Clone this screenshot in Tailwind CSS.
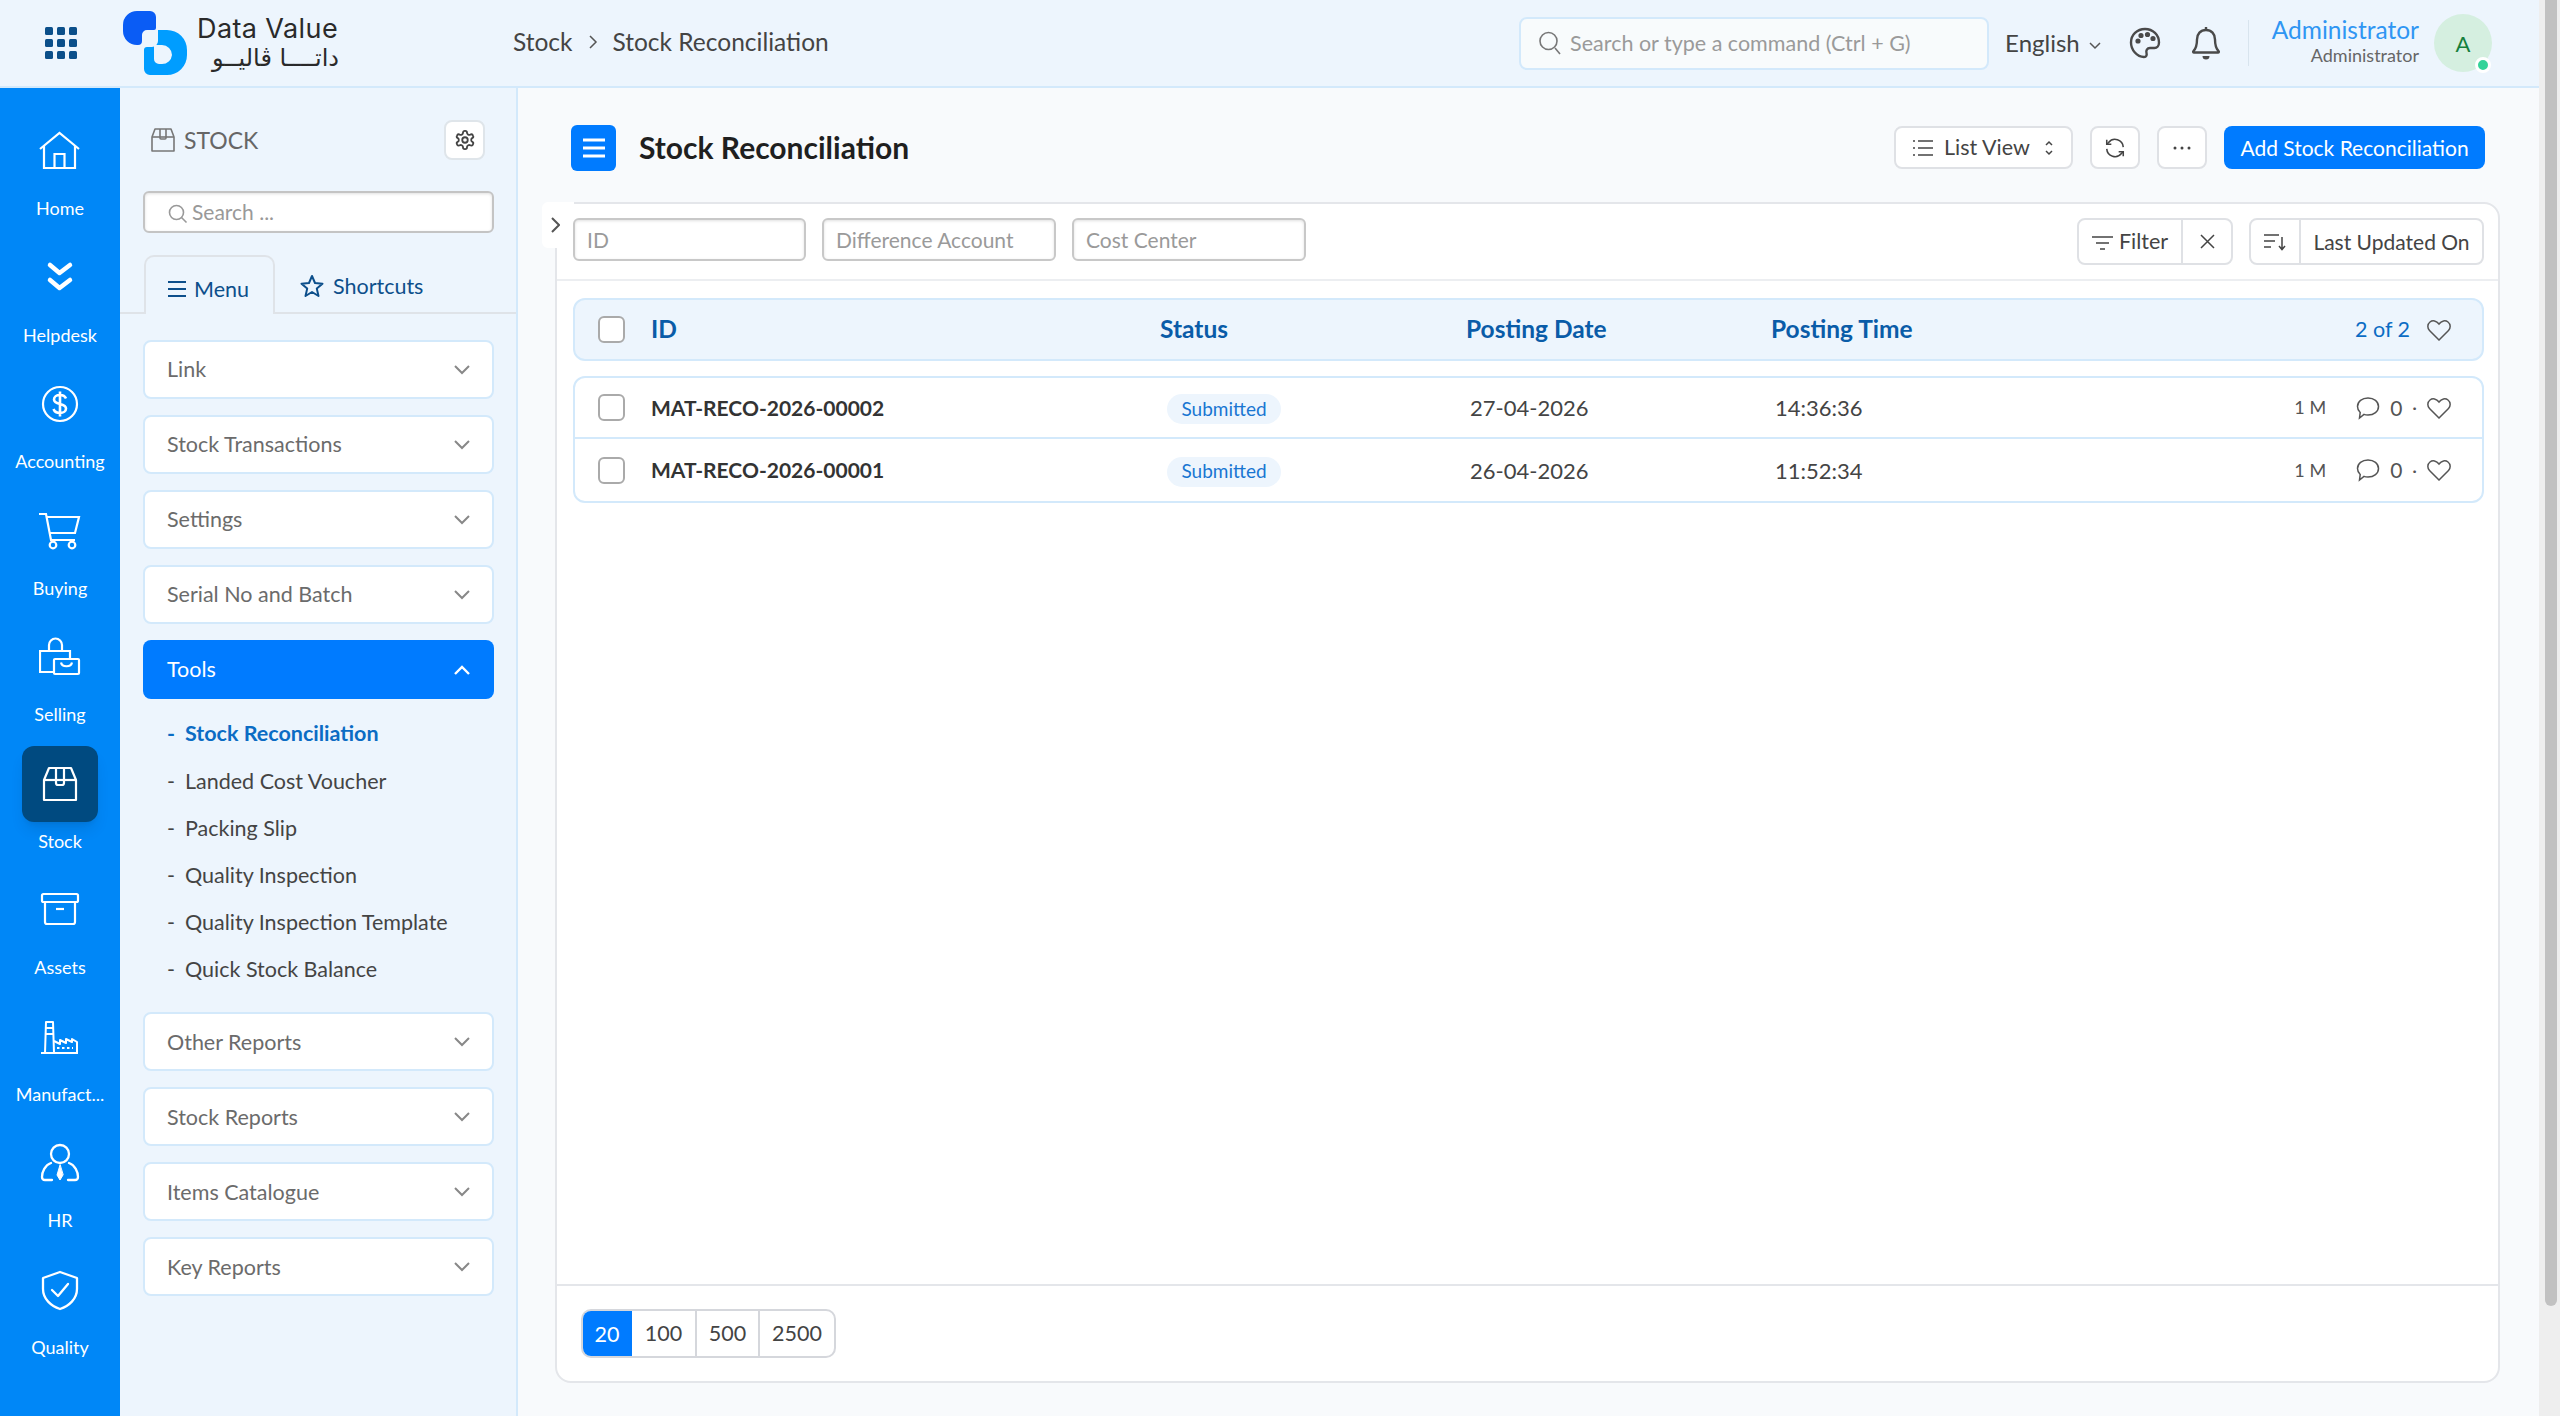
<!DOCTYPE html>
<html lang="en">
<head>
    <meta charset="UTF-8">
    <title>Stock Reconciliation</title>
    <script src="https://cdn.jsdelivr.net/npm/@tailwindcss/browser@4"></script>
</head>
<body class="h-screen overflow-hidden flex font-['Lato','Noto_Sans',sans-serif] text-[#444]">
    <div class="w-[2539px] h-full flex flex-col">
        <!-- Top bar -->
        <header class="h-[88px] shrink-0 flex items-center bg-[#edf5fd] border-b-2 border-[#d3e9fb]">
            <div class="w-[123px] shrink-0 pl-[45px]">
                <svg width="32" height="32" viewBox="0 0 32 32" fill="#0b4f8a">
                    <rect x="0" y="0" width="8" height="8" rx="1.5"/><rect x="12" y="0" width="8" height="8" rx="1.5"/><rect x="24" y="0" width="8" height="8" rx="1.5"/>
                    <rect x="0" y="12" width="8" height="8" rx="1.5"/><rect x="12" y="12" width="8" height="8" rx="1.5"/><rect x="24" y="12" width="8" height="8" rx="1.5"/>
                    <rect x="0" y="24" width="8" height="8" rx="1.5"/><rect x="12" y="24" width="8" height="8" rx="1.5"/><rect x="24" y="24" width="8" height="8" rx="1.5"/>
                </svg>
            </div>
            <!-- Logo -->
            <svg class="shrink-0" width="64" height="65" viewBox="0 0 64 65">
                <path fill="#0a5cf5" d="M14 0H27A6 6 0 0 1 33 6V17A2 2 0 0 1 31 19H24A5 5 0 0 0 19 24V30A4 4 0 0 1 15 34H14A14 14 0 0 1 0 20V14A14 14 0 0 1 14 0Z"/>
                <path fill="#009dff" d="M35 19H44A20 20 0 0 1 64 39V44A20 20 0 0 1 44 64H27A6 6 0 0 1 21 58V39A3 3 0 0 1 24 36H29A6 6 0 0 0 35 30Z"/>
                <path fill="#edf5fd" d="M31 34H39A10 10 0 0 1 49 44A10 10 0 0 1 39 53H36A5 5 0 0 1 31 48Z"/>
            </svg>
            <div class="w-[326px] shrink-0 pl-[10px] flex flex-col text-[#2a2a2a]">
                <span class="font-['Inter'] text-[27px] leading-[30px] tracking-[0.4px]">Data Value</span>
                <span class="font-['DejaVu_Sans'] text-[24px] leading-[28px] w-[142px] text-right" dir="rtl">داتــــا ڤاليــو</span>
            </div>
            <nav class="flex items-center text-[24.5px] text-[#444] -mt-[2px]">
                <span>Stock</span>
                <svg class="mx-[15px]" width="10" height="16" viewBox="0 0 10 16" fill="none" stroke="#555" stroke-width="1.5"><path d="M2 2l6 6-6 6"/></svg>
                <span>Stock Reconciliation</span>
            </nav>
            <div class="ml-auto flex items-center">
                <div class="w-[470px] h-[53px] rounded-[8px] border-2 border-[#d3e9fb] bg-[#f8fbfc] flex items-center pl-[17px] text-[#9a9a9a] text-[21.5px]">
                    <svg class="mr-[8px]" width="24" height="26" viewBox="0 0 24 26" fill="none" stroke="#777" stroke-width="1.6"><circle cx="10.5" cy="11" r="8.5"/><path d="M17 18l5 6"/></svg>
                    <span>Search or type a command (Ctrl + G)</span>
                </div>
                <span class="ml-[16px] text-[24px] text-[#444]">English</span>
                <svg class="ml-[9px] mt-[5px]" width="12" height="8" viewBox="0 0 12 8" fill="none" stroke="#555" stroke-width="1.5"><path d="M1 1l5 5 5-5"/></svg>
                <svg class="ml-[28px]" width="32" height="32" viewBox="0 0 32 32" fill="none" stroke="#4a4a4a" stroke-width="2.4"><path d="M16 2C8 2 2 8 2 15.500C2 23 8 30 15 30c2.500 0 3-2 2.500-4-.7-2.500.5-5 3.500-5h4.500C28 21 30 18.500 30 15.500 30 8 24 2 16 2Z"/><circle cx="9" cy="14" r="1.400" fill="#4a4a4a"/><circle cx="12" cy="8.500" r="1.400" fill="#4a4a4a"/><circle cx="18.500" cy="7.500" r="1.400" fill="#4a4a4a"/><circle cx="24" cy="11.500" r="1.400" fill="#4a4a4a"/></svg>
                <svg class="ml-[30px]" width="30" height="34" viewBox="0 0 30 34" fill="none" stroke="#4a4a4a" stroke-width="2.400"><path d="M15 4c-5.500 0-9 4-9 9.500 0 6-1 9-3.500 11.500-.7.700-.3 1.500.5 1.500h24c.8 0 1.200-.8.500-1.500C25 22.500 24 19.500 24 13.500 24 8 20.500 4 15 4Z"/><path d="M15 1v3"/><path d="M11.500 30a3.500 3.500 0 0 0 7 0Z" fill="#4a4a4a" stroke="none"/></svg>
                <div class="ml-[27px] w-px h-[46px] bg-[#d8e4ee]"></div>
                <div class="ml-[23px] flex flex-col items-end -mt-[6px]">
                    <span class="text-[24.5px] leading-[30px] text-[#2f96f3]">Administrator</span>
                    <span class="text-[18px] leading-[20px] text-[#666]">Administrator</span>
                </div>
                <div class="relative ml-[15px] mr-[47px] w-[58px] h-[58px] rounded-full bg-[#d5efe0] flex items-center justify-center text-[22px] text-[#15803d]">
                    A
                    <span class="absolute right-[1px] bottom-[-1px] w-[16px] h-[16px] rounded-full bg-[#34d399] border-[3px] border-white"></span>
                </div>
            </div>
        </header>

        <div class="flex-1 flex min-h-0">
            <!-- Module rail -->
            <aside class="w-[120px] shrink-0 bg-[#0087f7] text-white text-[18px] text-center flex flex-col">
                <div class="h-[126.5px] shrink-0 flex flex-col items-center pt-[25px]">
                    <div class="w-[76px] h-[76px] shrink-0 flex items-center justify-center">
                        <svg width="42" height="42" viewBox="0 0 42 42" fill="none" stroke="#fff" stroke-width="2.200"><path d="M1 19L20.500 3 40 19"/><path d="M5 16v22h31V16"/><path d="M15.500 38V24h10v14"/></svg>
                    </div>
                    <span class="mt-[7px] leading-[24px]">Home</span>
                </div>
                <div class="h-[126.5px] shrink-0 flex flex-col items-center pt-[25px]">
                    <div class="w-[76px] h-[76px] shrink-0 flex items-center justify-center">
                        <svg width="42" height="42" viewBox="0 0 42 42" fill="none" stroke="#fff" stroke-width="4.500" stroke-linecap="round" stroke-linejoin="round"><path d="M11 8l9.500 8L31 8"/><path d="M11 23l9.500 8L31 23"/></svg>
                    </div>
                    <span class="mt-[7px] leading-[24px]">Helpdesk</span>
                </div>
                <div class="h-[126.5px] shrink-0 flex flex-col items-center pt-[25px]">
                    <div class="w-[76px] h-[76px] shrink-0 flex items-center justify-center">
                        <svg width="42" height="42" viewBox="0 0 42 42" fill="none" stroke="#fff" stroke-width="2.200"><circle cx="21" cy="21" r="17"/><path stroke-width="2.600" d="M27 15.500c-1-2.500-3.500-3.500-6-3.500-3.500 0-6 1.800-6 4.500 0 6 12 3 12 9 0 2.800-2.700 4.500-6 4.500-3 0-5.500-1.300-6.500-4M21 8.500v25"/></svg>
                    </div>
                    <span class="mt-[7px] leading-[24px]">Accounting</span>
                </div>
                <div class="h-[126.5px] shrink-0 flex flex-col items-center pt-[25px]">
                    <div class="w-[76px] h-[76px] shrink-0 flex items-center justify-center">
                        <svg width="42" height="42" viewBox="0 0 42 42" fill="none" stroke="#fff" stroke-width="2.200"><path d="M0 4h7l5 26h24"/><path d="M8 7h32l-4 16H10.500"/><circle cx="14" cy="35" r="3.300"/><circle cx="33" cy="35" r="3.300"/></svg>
                    </div>
                    <span class="mt-[7px] leading-[24px]">Buying</span>
                </div>
                <div class="h-[126.5px] shrink-0 flex flex-col items-center pt-[25px]">
                    <div class="w-[76px] h-[76px] shrink-0 flex items-center justify-center">
                        <svg width="42" height="42" viewBox="0 0 42 42" fill="none" stroke="#fff" stroke-width="2.200"><path d="M14 36H1V15h30v8"/><path d="M10 15V9a6.500 6.500 0 0 1 13 0v6"/><rect x="15" y="23" width="25" height="15" rx="1"/><path d="M22 26.500c1 5 10 5 11 0"/></svg>
                    </div>
                    <span class="mt-[7px] leading-[24px]">Selling</span>
                </div>
                <div class="h-[126.5px] shrink-0 flex flex-col items-center pt-[25px]">
                    <div class="w-[76px] h-[76px] shrink-0 rounded-[12px] bg-[#004a80] shadow-lg flex items-center justify-center">
                        <svg width="42" height="42" viewBox="0 0 42 42" fill="none" stroke="#fff" stroke-width="2.200" stroke-linejoin="round"><path d="M5 17l5-12h22l5 12v20H5Z"/><path d="M5 17h32"/><path d="M17 5v15a2 2 0 0 0 2 2h4a2 2 0 0 0 2-2V5"/></svg>
                    </div>
                    <span class="mt-[7px] leading-[24px]">Stock</span>
                </div>
                <div class="h-[126.5px] shrink-0 flex flex-col items-center pt-[25px]">
                    <div class="w-[76px] h-[76px] shrink-0 flex items-center justify-center">
                        <svg width="42" height="42" viewBox="0 0 42 42" fill="none" stroke="#fff" stroke-width="2.200" stroke-linejoin="round"><rect x="3" y="5" width="36" height="8" rx="1.500"/><path d="M6 13v20a2 2 0 0 0 2 2h26a2 2 0 0 0 2-2V13"/><path d="M17 20h8"/></svg>
                    </div>
                    <span class="mt-[7px] leading-[24px]">Assets</span>
                </div>
                <div class="h-[126.5px] shrink-0 flex flex-col items-center pt-[25px]">
                    <div class="w-[76px] h-[76px] shrink-0 flex items-center justify-center">
                        <svg width="42" height="42" viewBox="0 0 42 42" fill="none" stroke="#fff" stroke-width="2" stroke-linejoin="round"><path d="M2 37h37"/><path d="M6 37l1-31h7l1 31"/><path d="M7 12h7M6.500 18h8"/><path d="M15 25l6 3v-4l6 3v-4l6 3v-3l5 3v11"/><path stroke-dasharray="2.500 2.500" d="M18 32h16"/></svg>
                    </div>
                    <span class="mt-[7px] leading-[24px]">Manufact...</span>
                </div>
                <div class="h-[126.5px] shrink-0 flex flex-col items-center pt-[25px]">
                    <div class="w-[76px] h-[76px] shrink-0 flex items-center justify-center">
                        <svg width="42" height="42" viewBox="0 0 42 42" fill="none" stroke="#fff" stroke-width="2.300" stroke-linecap="round"><circle cx="21" cy="12" r="9"/><path d="M12 21C6 23 3 30 3 35q0 3 3 3h7"/><path d="M30 21c6 2 9 9 9 14q0 3-3 3h-7"/><path d="M21 23l-3 10 3 5 3-5Z" fill="#fff" stroke-width="1"/></svg>
                    </div>
                    <span class="mt-[7px] leading-[24px]">HR</span>
                </div>
                <div class="h-[126.5px] shrink-0 flex flex-col items-center pt-[25px]">
                    <div class="w-[76px] h-[76px] shrink-0 flex items-center justify-center">
                        <svg width="42" height="42" viewBox="0 0 42 42" fill="none" stroke="#fff" stroke-width="2.300" stroke-linejoin="round" stroke-linecap="round"><path d="M21 3l17 6v11c0 10-8 17-17 20C12 37 4 30 4 20V9Z"/><path d="M13 21l6 6 10-12"/></svg>
                    </div>
                    <span class="mt-[7px] leading-[24px]">Quality</span>
                </div>
            </aside>

            <!-- Module sidebar -->
            <aside class="w-[398px] shrink-0 bg-[#edf5fd] border-r-2 border-[#d3e9fb] pl-[23px] pr-[22px] pt-[32px] flex flex-col">
                <div class="h-[40px] flex items-center">
                    <svg class="ml-[8px]" width="24" height="24" viewBox="0 0 24 24" fill="none" stroke="#777" stroke-width="1.600" stroke-linejoin="round"><path d="M1 9l3-8h16l3 8v14H1Z"/><path d="M1 9h22"/><path d="M9 1v9a1 1 0 0 0 1 1h4a1 1 0 0 0 1-1V1"/></svg>
                    <span class="ml-[9px] text-[23px] text-[#666]">STOCK</span>
                    <div class="ml-auto mr-[9px] w-[41px] h-[40px] rounded-[8px] bg-white border-2 border-[#dfe5ea] flex items-center justify-center">
                        <svg width="22" height="22" viewBox="0 0 24 24" fill="none" stroke="#444" stroke-width="2"><path d="M12.200 2h-.4a2 2 0 0 0-2 2v.2a2 2 0 0 1-1 1.700l-.4.300a2 2 0 0 1-2 0l-.2-.1a2 2 0 0 0-2.700.7l-.2.400a2 2 0 0 0 .7 2.700l.2.100a2 2 0 0 1 1 1.700v.5a2 2 0 0 1-1 1.700l-.2.100a2 2 0 0 0-.7 2.700l.2.400a2 2 0 0 0 2.700.7l.2-.1a2 2 0 0 1 2 0l.4.300a2 2 0 0 1 1 1.700v.2a2 2 0 0 0 2 2h.4a2 2 0 0 0 2-2v-.2a2 2 0 0 1 1-1.700l.4-.3a2 2 0 0 1 2 0l.2.100a2 2 0 0 0 2.700-.7l.2-.4a2 2 0 0 0-.7-2.700l-.2-.1a2 2 0 0 1-1-1.700v-.5a2 2 0 0 1 1-1.700l.2-.1a2 2 0 0 0 .7-2.700l-.2-.4a2 2 0 0 0-2.700-.7l-.2.100a2 2 0 0 1-2 0l-.4-.3a2 2 0 0 1-1-1.700V4a2 2 0 0 0-2-2Z"/><circle cx="12" cy="12" r="3"/></svg>
                    </div>
                </div>
                <div class="mt-[31px] h-[42px] rounded-[6px] border-2 border-[#c4c4c4] bg-white shadow-[inset_0_1px_3px_rgba(0,0,0,0.12)] flex items-center pl-[23px] text-[21px] text-[#999]">
                    <svg class="mr-[4px] mt-[4px]" width="20" height="20" viewBox="0 0 20 20" fill="none" stroke="#999" stroke-width="1.600"><circle cx="8.500" cy="8.500" r="7"/><path d="M13.500 13.500l5 5"/></svg>
                    <span>Search ...</span>
                </div>
                <!-- Tabs -->
                <div class="mt-[24px] -ml-[23px] -mr-[22px] h-[57px] flex items-end border-b-2 border-[#dfe3e8] px-[24px] text-[21.5px] text-[#0d4f8b]">
                    <div class="h-[59px] -mb-[2px] w-[131px] rounded-t-[10px] border-2 border-b-0 border-[#dfe3e8] bg-[#edf5fd] flex items-center pl-[22px] pt-[7px]">
                        <svg class="mr-[8px]" width="18" height="18" viewBox="0 0 18 18" fill="none" stroke="#0d4f8b" stroke-width="2"><path d="M0 2h18M0 9h18M0 16h18"/></svg>
                        <span>Menu</span>
                    </div>
                    <div class="h-[57px] flex items-center pl-[25px] pt-[5px]">
                        <svg class="mr-[9px]" width="24" height="24" viewBox="0 0 24 24" fill="none" stroke="#0d4f8b" stroke-width="2" stroke-linejoin="round"><path d="M12 2l3 7 7.500.7-5.700 4.900 1.700 7.400L12 18l-6.500 4 1.700-7.400L1.500 9.700 9 9Z"/></svg>
                        <span>Shortcuts</span>
                    </div>
                </div>
                <!-- Menu -->
                <div class="mt-[26px] flex flex-col gap-[16px] text-[21.5px] text-[#6b6b6b]">
                    <div class="h-[59px] rounded-[8px] border-2 border-[#d3e9fb] bg-white flex items-center justify-between pl-[22px] pr-[22px]"><span>Link</span><svg width="16" height="10" viewBox="0 0 16 10" fill="none" stroke="#888" stroke-width="2"><path d="M1 1l7 7 7-7"/></svg></div>
                    <div class="h-[59px] rounded-[8px] border-2 border-[#d3e9fb] bg-white flex items-center justify-between pl-[22px] pr-[22px]"><span>Stock Transactions</span><svg width="16" height="10" viewBox="0 0 16 10" fill="none" stroke="#888" stroke-width="2"><path d="M1 1l7 7 7-7"/></svg></div>
                    <div class="h-[59px] rounded-[8px] border-2 border-[#d3e9fb] bg-white flex items-center justify-between pl-[22px] pr-[22px]"><span>Settings</span><svg width="16" height="10" viewBox="0 0 16 10" fill="none" stroke="#888" stroke-width="2"><path d="M1 1l7 7 7-7"/></svg></div>
                    <div class="h-[59px] rounded-[8px] border-2 border-[#d3e9fb] bg-white flex items-center justify-between pl-[22px] pr-[22px]"><span>Serial No and Batch</span><svg width="16" height="10" viewBox="0 0 16 10" fill="none" stroke="#888" stroke-width="2"><path d="M1 1l7 7 7-7"/></svg></div>
                    <div class="h-[59px] rounded-[8px] bg-[#007bff] text-white flex items-center justify-between pl-[24px] pr-[24px]"><span>Tools</span><svg width="16" height="10" viewBox="0 0 16 10" fill="none" stroke="#fff" stroke-width="2.400"><path d="M1 9l7-7 7 7"/></svg></div>
                </div>
                <ul class="mt-[11px] text-[21.5px] text-[#444]">
                    <li class="h-[47.2px] flex items-center font-bold text-[#0b6cc4]"><span class="w-[25px] pl-[24px] mr-[17px]">-</span><span>Stock Reconciliation</span></li>
                    <li class="h-[47.2px] flex items-center"><span class="w-[25px] pl-[24px] mr-[17px]">-</span><span>Landed Cost Voucher</span></li>
                    <li class="h-[47.2px] flex items-center"><span class="w-[25px] pl-[24px] mr-[17px]">-</span><span>Packing Slip</span></li>
                    <li class="h-[47.2px] flex items-center"><span class="w-[25px] pl-[24px] mr-[17px]">-</span><span>Quality Inspection</span></li>
                    <li class="h-[47.2px] flex items-center"><span class="w-[25px] pl-[24px] mr-[17px]">-</span><span>Quality Inspection Template</span></li>
                    <li class="h-[47.2px] flex items-center"><span class="w-[25px] pl-[24px] mr-[17px]">-</span><span>Quick Stock Balance</span></li>
                </ul>
                <div class="mt-[19px] flex flex-col gap-[16px] text-[21.5px] text-[#6b6b6b]">
                    <div class="h-[59px] rounded-[8px] border-2 border-[#d3e9fb] bg-white flex items-center justify-between pl-[22px] pr-[22px]"><span>Other Reports</span><svg width="16" height="10" viewBox="0 0 16 10" fill="none" stroke="#888" stroke-width="2"><path d="M1 1l7 7 7-7"/></svg></div>
                    <div class="h-[59px] rounded-[8px] border-2 border-[#d3e9fb] bg-white flex items-center justify-between pl-[22px] pr-[22px]"><span>Stock Reports</span><svg width="16" height="10" viewBox="0 0 16 10" fill="none" stroke="#888" stroke-width="2"><path d="M1 1l7 7 7-7"/></svg></div>
                    <div class="h-[59px] rounded-[8px] border-2 border-[#d3e9fb] bg-white flex items-center justify-between pl-[22px] pr-[22px]"><span>Items Catalogue</span><svg width="16" height="10" viewBox="0 0 16 10" fill="none" stroke="#888" stroke-width="2"><path d="M1 1l7 7 7-7"/></svg></div>
                    <div class="h-[59px] rounded-[8px] border-2 border-[#d3e9fb] bg-white flex items-center justify-between pl-[22px] pr-[22px]"><span>Key Reports</span><svg width="16" height="10" viewBox="0 0 16 10" fill="none" stroke="#888" stroke-width="2"><path d="M1 1l7 7 7-7"/></svg></div>
                </div>
            </aside>

            <!-- Main -->
            <main class="flex-1 min-w-0 bg-[#f8fafc] pl-[37px] pr-[39px] flex flex-col">
                <div class="h-[114px] shrink-0 pl-[16px] pr-[15px] flex items-center pt-[5px]">
                    <div class="w-[45px] h-[46px] rounded-[6px] bg-[#007bff] flex items-center justify-center">
                        <svg width="22" height="20" viewBox="0 0 22 20" fill="none" stroke="#fff" stroke-width="3"><path d="M0 2h22M0 10h22M0 18h22"/></svg>
                    </div>
                    <h1 class="ml-[23px] text-[30px] font-bold text-[#1f1f1f]">Stock Reconciliation</h1>
                    <div class="ml-auto w-[179px] h-[43px] rounded-[8px] bg-white border-2 border-[#dfe1e5] flex items-center pl-[17px] text-[21.5px] text-[#444]">
                        <svg class="mr-[11px]" width="20" height="18" viewBox="0 0 20 18" fill="none" stroke="#444" stroke-width="1.500"><path d="M5 2h15M5 9h15M5 16h15M0 2h2M0 9h2M0 16h2"/></svg>
                        <span>List View</span>
                        <svg class="ml-[14px]" width="10" height="16" viewBox="0 0 10 16" fill="none" stroke="#444" stroke-width="1.500"><path d="M2 5l3-3 3 3M2 11l3 3 3-3"/></svg>
                    </div>
                    <div class="ml-[17px] w-[50px] h-[43px] rounded-[8px] bg-white border-2 border-[#dfe1e5] flex items-center justify-center">
                        <svg width="22" height="24" viewBox="0 0 24 24" fill="none" stroke="#444" stroke-width="1.700"><path d="M21 11a9 9 0 0 0-16-5l-2 2"/><path d="M3 3v5h5"/><path d="M3 13a9 9 0 0 0 16 5l2-2"/><path d="M21 21v-5h-5"/></svg>
                    </div>
                    <div class="ml-[17px] w-[50px] h-[43px] rounded-[8px] bg-white border-2 border-[#dfe1e5] flex items-center justify-center">
                        <svg width="18" height="4" viewBox="0 0 18 4" fill="#444"><circle cx="2" cy="2" r="1.500"/><circle cx="9" cy="2" r="1.500"/><circle cx="16" cy="2" r="1.500"/></svg>
                    </div>
                    <div class="ml-[17px] w-[261px] h-[43px] rounded-[8px] bg-[#007bff] flex items-center justify-center text-[21px] text-white">Add Stock Reconciliation</div>
                </div>

                <section class="relative h-[1181px] shrink-0 rounded-[16px] border-2 border-[#e4e6ea] bg-white flex flex-col">
                    <!-- collapse tab -->
                    <div class="absolute left-[-15px] top-[-2px] w-[32px] h-[46px] rounded-l-[6px] bg-white flex items-center justify-center pr-[6px]">
                        <svg width="9" height="16" viewBox="0 0 9 16" fill="none" stroke="#555" stroke-width="2"><path d="M1 1l7 7-7 7"/></svg>
                    </div>
                    <!-- Filters -->
                    <div class="h-[77px] shrink-0 border-b-2 border-[#eceef1] pl-[16px] pr-[14px] flex items-start pt-[14px]">
                        <div class="relative w-[233px] h-[43px] rounded-[6px] border-2 border-[#c8c8c8] bg-white shadow-[inset_0_1px_3px_rgba(0,0,0,0.12)] flex items-center pl-[12px] text-[21px] text-[#9a9a9a]">ID</div>
                        <div class="ml-[16px] w-[234px] h-[43px] rounded-[6px] border-2 border-[#c8c8c8] bg-white shadow-[inset_0_1px_3px_rgba(0,0,0,0.12)] flex items-center pl-[12px] text-[21px] text-[#9a9a9a]">Difference Account</div>
                        <div class="ml-[16px] w-[234px] h-[43px] rounded-[6px] border-2 border-[#c8c8c8] bg-white shadow-[inset_0_1px_3px_rgba(0,0,0,0.12)] flex items-center pl-[12px] text-[21px] text-[#9a9a9a]">Cost Center</div>
                        <div class="ml-auto h-[47px] w-[156px] rounded-[8px] border-2 border-[#dfe1e5] flex text-[21.5px] text-[#444]">
                            <div class="w-[104px] border-r-2 border-[#dfe1e5] flex items-center pl-[13px]">
                                <svg class="mr-[6px] mt-[3px]" width="21" height="16" viewBox="0 0 21 16" fill="none" stroke="#444" stroke-width="1.500"><path d="M0 2h21M4 8h13M8 14h5"/></svg>
                                <span>Filter</span>
                            </div>
                            <div class="flex-1 flex items-center justify-center">
                                <svg width="15" height="15" viewBox="0 0 15 15" fill="none" stroke="#444" stroke-width="1.500"><path d="M1 1l13 13M14 1L1 14"/></svg>
                            </div>
                        </div>
                        <div class="ml-[16px] h-[47px] w-[235px] rounded-[8px] border-2 border-[#dfe1e5] flex text-[21px] text-[#444]">
                            <div class="w-[50px] border-r-2 border-[#dfe1e5] flex items-center justify-center">
                                <svg width="22" height="18" viewBox="0 0 22 18" fill="none" stroke="#444" stroke-width="1.500"><path d="M0 2h15M0 8h11M0 14h7M18 4v12M15 13l3 3.500 3-3.500"/></svg>
                            </div>
                            <div class="flex-1 flex items-center justify-center">Last Updated On</div>
                        </div>
                    </div>

                    <!-- List -->
                    <div class="flex-1 pl-[16px] pr-[14px] pt-[17px]">
                        <div class="h-[63px] rounded-[12px] border-2 border-[#d3e9fb] bg-[#edf5fd] flex items-center text-[24.5px] font-bold text-[#0a5ca8]">
                            <div class="w-[76px] pl-[23px] shrink-0"><div class="w-[27px] h-[27px] rounded-[6px] border-2 border-[#aaa] bg-white"></div></div>
                            <div class="w-[509px] shrink-0">ID</div>
                            <div class="w-[306px] shrink-0">Status</div>
                            <div class="w-[305px] shrink-0">Posting Date</div>
                            <div class="w-[270px] shrink-0">Posting Time</div>
                            <div class="flex-1 flex items-center justify-end pr-[31px] text-[21.5px] font-normal text-[#0b6cc4]">
                                <span>2 of 2</span>
                                <svg class="ml-[17px]" width="24" height="22" viewBox="0 0 24 22" fill="none" stroke="#555" stroke-width="1.500"><path d="M12 21L2.500 11.500C0 9 .5 5 3 3c2.500-2 6.500-1.500 9 2 2.500-3.500 6.500-4 9-2s3 6 .5 8.500Z"/></svg>
                            </div>
                        </div>
                        <div class="mt-[15px] rounded-[12px] border-2 border-[#d3e9fb] bg-white text-[22px] text-[#444] divide-y-2 divide-[#d3e9fb]">
                            <div class="h-[61px] flex items-center">
                                <div class="w-[76px] pl-[23px] shrink-0"><div class="w-[27px] h-[27px] rounded-[6px] border-2 border-[#aaa]"></div></div>
                                <div class="w-[509px] shrink-0 text-[21px] font-bold text-[#333]">MAT-RECO-2026-00002</div>
                                <div class="w-[306px] shrink-0 pl-[7px]"><span class="inline-flex items-center justify-center w-[114px] h-[30px] rounded-full bg-[#edf5fd] text-[19px] text-[#1976d2]">Submitted</span></div>
                                <div class="w-[305px] shrink-0 pl-[4px]">27-04-2026</div>
                                <div class="w-[270px] shrink-0 pl-[4px]">14:36:36</div>
                                <div class="flex-1 flex items-center justify-end pr-[31px] text-[18px] text-[#555]">
                                    <span>1 M</span>
                                    <svg class="ml-[30px]" width="24" height="24" viewBox="0 0 24 24" fill="none" stroke="#555" stroke-width="1.500"><path d="M12 2c6 0 10.500 3.500 10.500 8.500S18 19 12 19c-1.500 0-3-.2-4-.6L3.500 22l.7-5.500C2.500 15 1.500 13 1.500 10.500 1.500 5.500 6 2 12 2Z"/></svg>
                                    <span class="ml-[10px] text-[21px]">0</span>
                                    <span class="ml-[10px]">·</span>
                                    <svg class="ml-[10px]" width="24" height="22" viewBox="0 0 24 22" fill="none" stroke="#555" stroke-width="1.500"><path d="M12 21L2.500 11.500C0 9 .5 5 3 3c2.500-2 6.500-1.500 9 2 2.500-3.500 6.500-4 9-2s3 6 .5 8.500Z"/></svg>
                                </div>
                            </div>
                            <div class="h-[62px] flex items-center">
                                <div class="w-[76px] pl-[23px] shrink-0"><div class="w-[27px] h-[27px] rounded-[6px] border-2 border-[#aaa]"></div></div>
                                <div class="w-[509px] shrink-0 text-[21px] font-bold text-[#333]">MAT-RECO-2026-00001</div>
                                <div class="w-[306px] shrink-0 pl-[7px]"><span class="inline-flex items-center justify-center w-[114px] h-[30px] rounded-full bg-[#edf5fd] text-[19px] text-[#1976d2]">Submitted</span></div>
                                <div class="w-[305px] shrink-0 pl-[4px]">26-04-2026</div>
                                <div class="w-[270px] shrink-0 pl-[4px]">11:52:34</div>
                                <div class="flex-1 flex items-center justify-end pr-[31px] text-[18px] text-[#555]">
                                    <span>1 M</span>
                                    <svg class="ml-[30px]" width="24" height="24" viewBox="0 0 24 24" fill="none" stroke="#555" stroke-width="1.500"><path d="M12 2c6 0 10.500 3.500 10.500 8.500S18 19 12 19c-1.500 0-3-.2-4-.6L3.500 22l.7-5.500C2.500 15 1.500 13 1.500 10.500 1.500 5.500 6 2 12 2Z"/></svg>
                                    <span class="ml-[10px] text-[21px]">0</span>
                                    <span class="ml-[10px]">·</span>
                                    <svg class="ml-[10px]" width="24" height="22" viewBox="0 0 24 22" fill="none" stroke="#555" stroke-width="1.500"><path d="M12 21L2.500 11.500C0 9 .5 5 3 3c2.500-2 6.500-1.500 9 2 2.500-3.500 6.500-4 9-2s3 6 .5 8.500Z"/></svg>
                                </div>
                            </div>
                        </div>
                    </div>

                    <!-- Footer -->
                    <div class="h-[97px] shrink-0 border-t-2 border-[#e4e6ea] pl-[24px] pt-[23px]">
                        <div class="inline-flex h-[49px] rounded-[10px] border-2 border-[#d5d7dc] overflow-hidden text-[21.5px] text-[#444]">
                            <div class="w-[50px] -ml-px -mt-px h-[49px] bg-[#007bff] text-white flex items-center justify-center">20</div>
                            <div class="w-[65px] border-r-2 border-[#d5d7dc] flex items-center justify-center">100</div>
                            <div class="w-[63px] border-r-2 border-[#d5d7dc] flex items-center justify-center">500</div>
                            <div class="w-[74px] flex items-center justify-center">2500</div>
                        </div>
                    </div>
                </section>
            </main>
        </div>
    </div>

    <!-- Page scrollbar -->
    <div class="flex-1 bg-[#eeeeee] pl-[6px] pr-[3px]">
        <div class="h-[1306px] rounded-b-full bg-[#c1c1c1]"></div>
    </div>
</body>
</html>
